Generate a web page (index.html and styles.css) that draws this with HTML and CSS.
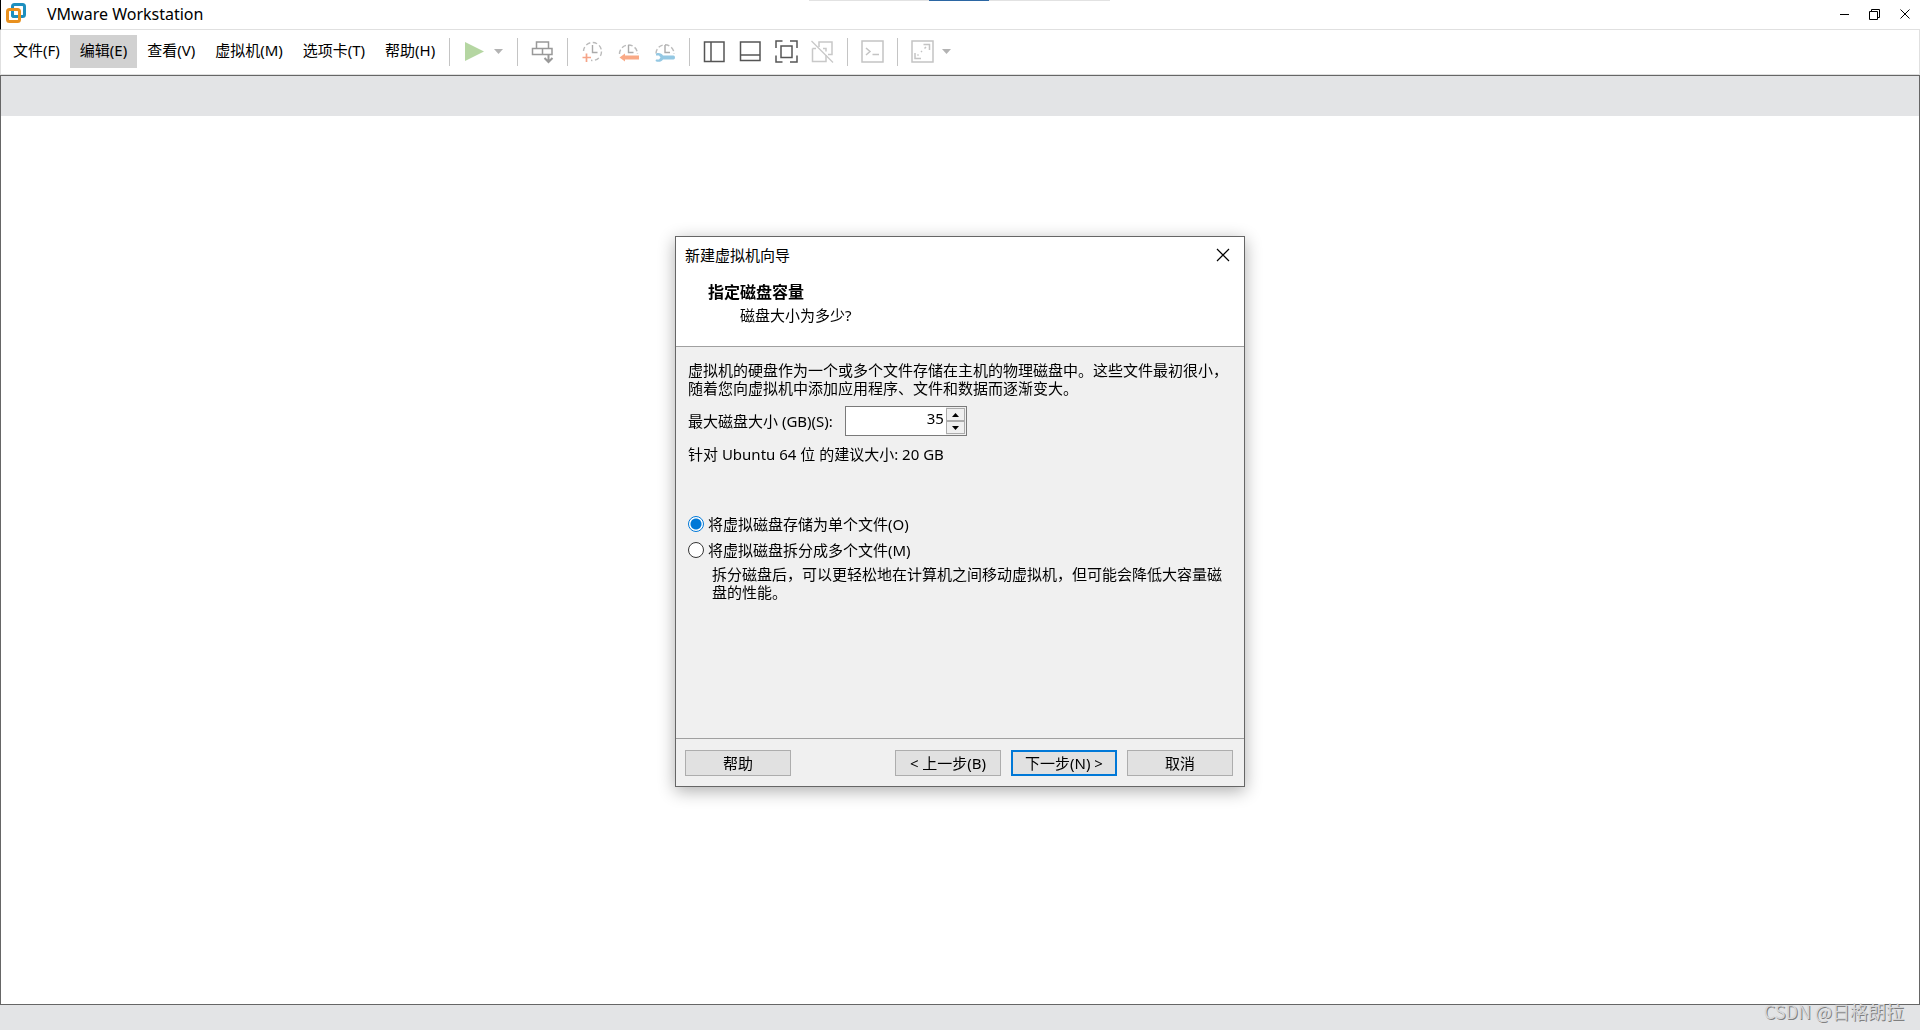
FILE: index.html
```html
<!DOCTYPE html>
<html lang="zh-CN">
<head>
<meta charset="utf-8">
<title>VMware Workstation</title>
<link rel="stylesheet" href="styles.css">
</head>
<body>
<div class="app">
  <header class="titlebar">
    <svg class="logo" width="22" height="22" viewBox="0 0 22 22" fill="none" stroke-width="3">
      <rect x="7.5" y="1.5" width="12" height="12" rx="2" stroke="#1d8fbf"/>
      <rect x="2.500" y="6.500" width="12" height="12" rx="2" stroke="#e8901e"/>
      <path d="M7.500 9V12a1.500 1.500 0 0 0 1.500 1.500H12" stroke="#1d8fbf"/>
    </svg>
    <h1 class="app-name">VMware Workstation</h1>
    <div class="window-controls">
      <button class="win-btn" type="button" aria-label="最小化"><svg width="12" height="12" viewBox="0 0 12 12"><path d="M1 6.500H10" stroke="#000"/></svg></button>
      <button class="win-btn" type="button" aria-label="还原"><svg width="12" height="12" viewBox="0 0 12 12" fill="none" stroke="#000"><path d="M.5 3.500H8.500V11.500H.5ZM2.500 3.500V1.500H10.500V9.500H8.500"/></svg></button>
      <button class="win-btn" type="button" aria-label="关闭"><svg width="12" height="12" viewBox="0 0 12 12"><path d="M1.500 1.500L10.500 10.500M10.500 1.500L1.500 10.500" stroke="#000"/></svg></button>
    </div>
    <div class="edge-tab"><span class="edge-mark"></span></div>
  </header>

  <div class="menubar">
    <nav class="menus">
      <button type="button" class="menu">文件(F)</button>
      <button type="button" class="menu menu-active">编辑(E)</button>
      <button type="button" class="menu">查看(V)</button>
      <button type="button" class="menu">虚拟机(M)</button>
      <button type="button" class="menu">选项卡(T)</button>
      <button type="button" class="menu">帮助(H)</button>
    </nav>
    <div class="tools">
      <span class="sep"></span>
      <div class="split">
        <button type="button" class="tool" aria-label="开机"><svg viewBox="0 0 24 24"><path d="M3 2L22 11.500L3 21Z" fill="#b5d6a2"/></svg></button>
        <button type="button" class="tool caret" aria-label="电源选项"><svg viewBox="0 0 12 24"><path d="M2 9H11L6.500 14Z" fill="#b3b3b3"/></svg></button>
      </div>
      <span class="sep"></span>
      <button type="button" class="tool" aria-label="发送 Ctrl+Alt+Del"><svg viewBox="0 0 24 24" fill="none" stroke="#999" stroke-width="1.500"><path d="M6.500 8V2H18.500V8M2.500 8.500H22V14.500H2.500ZM12.500 8.500V14.500"/><path d="M18.500 14V21M14.500 18L18.500 22L22.500 18" stroke-width="2"/></svg></button>
      <span class="sep"></span>
      <button type="button" class="tool" aria-label="拍摄快照"><svg viewBox="0 0 24 24" fill="none"><circle cx="12.500" cy="11.500" r="9" stroke="#bbb" stroke-width="1.400" stroke-dasharray="4.500 2.570"/><path d="M12.500 5V12.500H17.500" stroke="#aaa" stroke-width="1.400"/><path d="M1 11H11V23H1Z" fill="#fff"/><path d="M2.500 17.500H11M6.500 13.500V22" stroke="#f5a488" stroke-width="1.700"/></svg></button>
      <button type="button" class="tool" aria-label="恢复快照"><svg viewBox="0 0 24 24" fill="none"><path d="M3.500 14A9 9 0 1 1 21.500 14" stroke="#bbb" stroke-width="1.400" stroke-dasharray="4.500 2.400"/><path d="M12.500 5V12.500H17.500" stroke="#aaa" stroke-width="1.400"/><path d="M3.500 17.500L9 13.500V15.500H23V19.500H9V21.500Z" fill="#f9a986"/></svg></button>
      <button type="button" class="tool" aria-label="管理快照"><svg viewBox="0 0 24 24" fill="none"><path d="M4 13.500A9 9 0 1 1 22 14" stroke="#bbb" stroke-width="1.400" stroke-dasharray="4.500 2.400"/><path d="M13 5V12.500H18" stroke="#aaa" stroke-width="1.400"/><path d="M4 13.500C7 12.500 10 13.500 11 15.500H21.500Q23 15.500 23 17.500Q23 19.500 21.500 19.500H11C9.500 22 6 22.500 3.500 21L4 19.500H7L8.500 17.500L7 15.500H4Z" fill="#94c8e3"/></svg></button>
      <span class="sep"></span>
      <button type="button" class="tool" aria-label="显示库"><svg viewBox="0 0 24 24" fill="none" stroke="#555" stroke-width="1.500"><path d="M2.500 2H22V21.500H2.500ZM9 2V21.500"/></svg></button>
      <button type="button" class="tool" aria-label="显示缩略图栏"><svg viewBox="0 0 24 24" fill="none" stroke="#555" stroke-width="1.500"><path d="M2.500 2H22V20.500H2.500ZM2.500 15H22"/></svg></button>
      <button type="button" class="tool" aria-label="全屏"><svg viewBox="0 0 24 24" fill="none" stroke="#555" stroke-width="1.500"><path d="M2 8V1H8.500M16 1H23V8M23 15.500V22H16M8.500 22H2V15.500M7 6H18V17.500H7Z"/></svg></button>
      <button type="button" class="tool" aria-label="Unity"><svg viewBox="0 0 24 24" fill="none" stroke="#c8c8c8" stroke-width="1.500"><path d="M9 7V2H22V14.500H18M2.500 8.500V21.500H16V15M2.500 8.500H6M13 8.500H16V11.500"/><path d="M1.500 1L23 22.500" stroke-width="1.200"/></svg></button>
      <span class="sep"></span>
      <button type="button" class="tool" aria-label="控制台"><svg viewBox="0 0 24 24" fill="none" stroke="#c4c4c4" stroke-width="1.500"><path d="M2 1H23V22H2Z"/><path d="M6 8L10 11.500L6 15M12.500 14.500H19"/></svg></button>
      <span class="sep"></span>
      <div class="split">
        <button type="button" class="tool" aria-label="拉伸"><svg viewBox="0 0 24 24" fill="none" stroke="#c4c4c4" stroke-width="1.500"><path d="M2 1H23V22H2Z"/><path d="M13.500 4.500H19.500V10M5 13V18.500H11M14.500 8.500L16 7M8.500 14.500L7.500 15.500M11 12L12 11"/></svg></button>
        <button type="button" class="tool caret" aria-label="拉伸选项"><svg viewBox="0 0 12 24"><path d="M2 9H11L6.500 14Z" fill="#b3b3b3"/></svg></button>
      </div>
    </div>
  </div>

  <main class="workspace"><div class="tab-strip"></div></main>
  <footer class="statusbar"><span class="watermark">CSDN @日格朗拉</span></footer>
</div>

<div class="overlay">
  <form class="dialog" role="dialog" aria-labelledby="wizard-title">
    <div class="dialog-head">
      <div class="dialog-title">
        <span id="wizard-title">新建虚拟机向导</span>
        <button type="button" class="dialog-close" aria-label="关闭"><svg width="14" height="14" viewBox="0 0 14 14"><path d="M1 1L13 13M13 1L1 13" stroke="#000" stroke-width="1.200"/></svg></button>
      </div>
      <h2 class="step">指定磁盘容量</h2>
      <p class="question">磁盘大小为多少?</p>
    </div>
    <div class="dialog-body">
      <p class="text">虚拟机的硬盘作为一个或多个文件存储在主机的物理磁盘中。这些文件最初很小，<br>随着您向虚拟机中添加应用程序、文件和数据而逐渐变大。</p>
      <div class="size-row">
        <label for="disk-size">最大磁盘大小 (GB)(S):</label>
        <div class="spin">
          <input id="disk-size" class="spin-input" type="text" inputmode="numeric" value="35">
          <div class="spin-buttons">
            <button type="button" class="spin-btn" aria-label="增加"><svg width="7" height="4" viewBox="0 0 7 4"><path d="M0 4L3.500 0L7 4Z"/></svg></button>
            <button type="button" class="spin-btn" aria-label="减少"><svg width="7" height="4" viewBox="0 0 7 4"><path d="M0 0L3.500 4L7 0Z"/></svg></button>
          </div>
        </div>
      </div>
      <p class="text">针对 Ubuntu 64 位 的建议大小: 20 GB</p>
      <div class="choices">
        <label class="choice"><input type="radio" name="store" class="radio" checked>将虚拟磁盘存储为单个文件(O)</label>
        <label class="choice"><input type="radio" name="store" class="radio">将虚拟磁盘拆分成多个文件(M)</label>
        <p class="text note">拆分磁盘后，可以更轻松地在计算机之间移动虚拟机，但可能会降低大容量磁<br>盘的性能。</p>
      </div>
    </div>
    <div class="dialog-foot">
      <button type="button" class="btn btn-help">帮助</button>
      <button type="button" class="btn">&lt; 上一步(B)</button>
      <button type="submit" class="btn btn-default">下一步(N) &gt;</button>
      <button type="button" class="btn">取消</button>
    </div>
  </form>
</div>
</body>
</html>
```
FILE: styles.css
```css
* { box-sizing: border-box; }

body {
  margin: 0;
  background: #fff;
  color: #000;
  font: 15px/18px "Noto Sans", "Noto Sans CJK SC", sans-serif;
}

h1, h2, p { margin: 0; }

button, input { margin: 0; padding: 0; font: inherit; color: inherit; }

svg { display: block; }

.app { display: flex; flex-direction: column; min-height: 100vh; }

/* Title bar */
.titlebar {
  position: relative;
  display: flex;
  align-items: center;
  height: 30px;
  padding: 0 9px 1px 4px;
  border-bottom: 1px solid #e0e0e0;
  border-left: 1px solid #000;
}
.app-name { margin-left: 20px; font-size: 16px; font-weight: 400; }
.window-controls { display: flex; gap: 18px; margin-left: auto; }
.win-btn { width: 12px; height: 12px; border: 0; background: none; }
.edge-tab {
  position: absolute;
  top: 0;
  left: 50%;
  display: flex;
  justify-content: center;
  width: 301px;
  height: 1px;
  margin-left: -152px;
  background: #e2e2e2;
}
.edge-mark { width: 60px; background: #2b66a3; }

/* Menus and toolbar */
.menubar {
  display: flex;
  align-items: center;
  height: 45px;
  padding-left: 2px;
  border: 1px solid #e0e0e0;
  border-top: 0;
}
.menus { display: flex; padding-bottom: 2px; }
.menu {
  height: 33px;
  padding: 0 10px 2px;
  border: 0;
  background: none;
  white-space: nowrap;
}
.menu-active { background: #d1d1d1; }
.tools { display: flex; align-items: center; gap: 12px; margin-left: 4px; }
.sep { width: 1px; height: 28px; background: #c4c4c4; }
.sep:not(:first-child) { margin-left: 1px; }
.split { display: flex; gap: 6px; }
.tool { width: 24px; height: 24px; border: 0; background: none; }
.caret { width: 12px; }

/* Workspace */
.workspace { flex: 1; border: 1px solid #666; }
.tab-strip { height: 40px; background: #e3e4e6; }
.statusbar {
  display: flex;
  justify-content: flex-end;
  height: 25px;
  padding-right: 16px;
  background: #e3e4e6;
}
.watermark {
  color: #d6d7d9;
  font: 18px/12px "Noto Sans CJK SC", sans-serif;
  text-shadow: 1px 1px 0 #808080;
}

/* Wizard dialog */
.overlay { position: fixed; inset: 0 0 7px; display: grid; place-items: center; }
.dialog {
  display: flex;
  flex-direction: column;
  width: 570px;
  min-height: 551px;
  border: 1px solid #666;
  background: #f0f0f0;
  box-shadow: 0 4px 16px rgba(0, 0, 0, .32);
}
.dialog-head { height: 110px; border-bottom: 1px solid #a0a0a0; background: #fff; }
.dialog-title {
  display: flex;
  align-items: center;
  justify-content: space-between;
  height: 36px;
  padding: 0 14px 0 9px;
}
.dialog-close { width: 14px; height: 14px; border: 0; background: none; }
.step { margin: 9px 0 0 32px; font-size: 16px; line-height: 20px; }
.question { margin: 4px 0 0 64px; }
.dialog-body { flex: 1; padding: 14px 12px; white-space: nowrap; }
.size-row { display: flex; align-items: center; gap: 12px; margin: 9px 0; }
.spin {
  display: flex;
  width: 122px;
  height: 30px;
  border: 1px solid #7a7a7a;
  background: #fff;
}
.spin-input {
  flex: 1;
  min-width: 0;
  padding: 0 2px 6px;
  border: 0;
  outline: 0;
  background: none;
  text-align: right;
}
.spin-buttons {
  display: flex;
  flex-direction: column;
  width: 20px;
  padding: 1px 1px 1px 0;
  background: #f0f0f0;
}
.spin-btn {
  display: grid;
  flex: 1;
  place-items: center;
  border: 1px solid #acacac;
  background: #f0f0f0;
}
.choices { margin-top: 48px; }
.choice { display: flex; align-items: center; gap: 4px; height: 26px; }
.radio {
  width: 16px;
  height: 16px;
  border: 1px solid #333;
  border-radius: 50%;
  background: #fff;
  appearance: none;
}
.radio:checked {
  border-color: #0078d7;
  background: radial-gradient(circle, #0078d7 5px, #fff 6px);
}
.note { margin: 2px 0 0 24px; }
.dialog-foot {
  display: flex;
  gap: 10px;
  height: 48px;
  padding: 11px 11px 0 9px;
  border-top: 1px solid #a0a0a0;
}
.btn { width: 106px; height: 26px; border: 1px solid #adadad; background: #e1e1e1; }
.btn-help { margin-right: auto; }
.btn-default { border: 2px solid #0078d7; }
```
